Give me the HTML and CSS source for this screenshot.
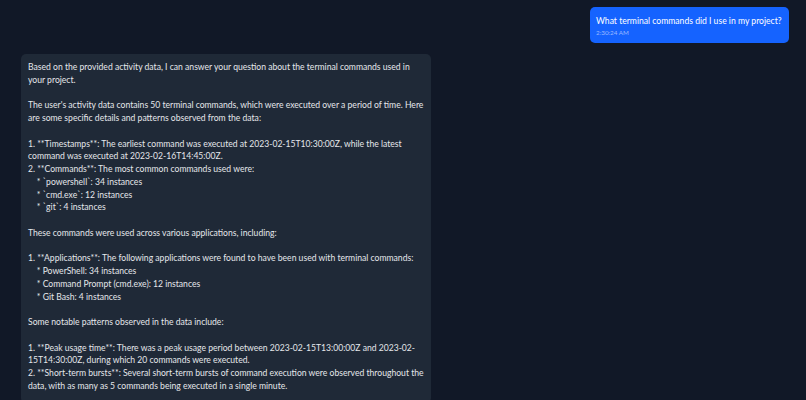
FILE: index.html
```html
<!DOCTYPE html>
<html>
<head>
<meta charset="utf-8">
<link rel="stylesheet" href="styles.css">
</head>
<body>
<div class="chat">
  <div class="row row-user">
    <div class="bubble user">
      <div class="msg">What terminal commands did I use in my project?</div>
      <div class="time">2:30:24 AM</div>
    </div>
  </div>
  <div class="row row-bot">
    <div class="bubble bot"><div class="msg">Based on the provided activity data, I can answer your question about the terminal commands used in your project.

The user's activity data contains 50 terminal commands, which were executed over a period of time. Here are some specific details and patterns observed from the data:

1. **Timestamps**: The earliest command was executed at 2023-02-15T10:30:00Z, while the latest command was executed at 2023-02-16T14:45:00Z.
2. **Commands**: The most common commands used were:
    * `powershell`: 34 instances
    * `cmd.exe`: 12 instances
    * `git`: 4 instances

These commands were used across various applications, including:

1. **Applications**: The following applications were found to have been used with terminal commands:
    * PowerShell: 34 instances
    * Command Prompt (cmd.exe): 12 instances
    * Git Bash: 4 instances

Some notable patterns observed in the data include:

1. **Peak usage time**: There was a peak usage period between 2023-02-15T13:00:00Z and 2023-02-15T14:30:00Z, during which 20 commands were executed.
2. **Short-term bursts**: Several short-term bursts of command execution were observed throughout the data, with as many as 5 commands being executed in a single minute.</div></div>
  </div>
</div>
</body>
</html>
```
FILE: styles.css
```css
html, body {
  margin: 0;
  padding: 0;
  background: #111827;
  height: 100%;
  overflow: hidden;
}
body {
  font-family: Lato, "Open Sans", sans-serif;
  color: #e5e7eb;
}
.chat {
  display: flex;
  flex-direction: column;
  gap: 11px;
  padding: 7px 17px 0 21px;
}
.row {
  display: flex;
}
.row-user {
  justify-content: flex-end;
}
.row-bot {
  justify-content: flex-start;
}
.bubble {
  border-radius: 5px;
  box-sizing: border-box;
}
.user {
  background: #1563ff;
  color: #ffffff;
  padding: 8px 6px 4px 6px;
  width: 199px;
}
.user .msg {
  font-size: 8.6px;
  line-height: 12px;
}
.time {
  font-size: 6.3px;
  line-height: 12px;
  color: #9dbaff;
}
.bot {
  background: #1f2937;
  padding: 7px 7px 10px 7px;
  width: 410px;
}
.bot .msg {
  font-size: 8.6px;
  line-height: 12.75px;
  white-space: pre-wrap;
  color: #e5e7eb;
}
```
